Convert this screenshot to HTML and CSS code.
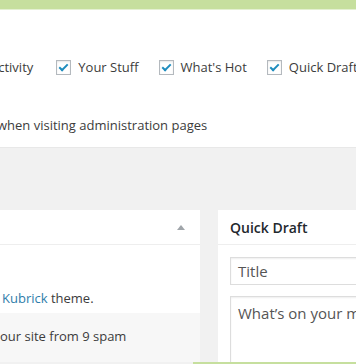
FILE: index.html
```html
<!DOCTYPE html>
<html>
<head>
    <title>Dashboard</title>
    <link rel="stylesheet" href="styles.css">
</head>
<body>
    <div class="topbar"></div>

    <div class="screen-options">
        <div class="boxes">
            <span class="label first">Activity</span>
            <label class="label"><span class="check"></span>Your Stuff</label>
            <label class="label"><span class="check"></span>What's Hot</label>
            <label class="label"><span class="check"></span>Quick Draft</label>
        </div>
        <p class="note">when visiting administration pages</p>
    </div>

    <div class="dashboard">
        <div class="panel left">
            <div class="panel-head">
                <span class="toggle"></span>
            </div>
            <div class="panel-body">
                <p class="theme"><a href="#">Kubrick</a> theme.</p>
            </div>
            <div class="panel-foot">
                <p>our site from 9 spam</p>
            </div>
        </div>
        <div class="panel right">
            <div class="panel-head">
                <h2>Quick Draft</h2>
            </div>
            <div class="panel-body">
                <div class="input">Title</div>
                <div class="textarea">What’s on your mind?</div>
            </div>
        </div>
    </div>
    <div class="strip"></div>
</body>
</html>
```

FILE: styles.css
```css
html, body { margin: 0; padding: 0; }
body { font-family: "Open Sans", Arial, sans-serif; font-size: 13px; color: #3c3c3c; background: #f1f1f1; width: 356px; height: 364px; overflow: hidden; }
.topbar { height: 9px; background: #c6df9e; border-bottom: 1px solid #e4f0d2; }
.screen-options { background: #fff; height: 138px; border-bottom: 1px solid #e8e8e8; box-sizing: border-box; padding-top: 49px; white-space: nowrap; }
.boxes { display: flex; align-items: center; height: 16px; }
.label { display: flex; align-items: center; margin-right: 20px; }
.label.first { margin-left: -10px; margin-right: 23px; }
.check { width: 13px; height: 13px; border: 1px solid #b4b9be; background: #fff; box-shadow: inset 0 1px 2px rgba(0,0,0,0.1); margin-right: 7px; position: relative; flex: none; }
.check::after { content: ""; position: absolute; left: 4px; top: 1px; width: 3px; height: 7px; border: solid #1e8cbe; border-width: 0 2px 2px 0; transform: rotate(45deg); }
.note { margin: 41px 0 0 -3px; }
.dashboard { display: flex; gap: 18px; padding-top: 62px; height: 214px; box-sizing: border-box; overflow: hidden; }
.panel { background: #fff; display: flex; flex-direction: column; }
.left { width: 200px; flex: none; }
.right { flex: 1; min-width: 0; }
.panel-head { height: 35px; border-bottom: 1px solid #eee; display: flex; align-items: center; padding: 0 12px; box-sizing: border-box; flex: none; }
.left .panel-head { justify-content: flex-end; padding-right: 15px; }
.toggle { width: 0; height: 0; border-left: 4px solid transparent; border-right: 4px solid transparent; border-bottom: 5px solid #a0a5aa; }
h2 { font-size: 14px; font-weight: 600; margin: 0; color: #23282d; }
.left .panel-body { height: 68px; box-sizing: border-box; padding: 44px 0 0 2px; }
.theme { margin: 0; }
a { color: #2e7daa; text-decoration: none; }
.panel-foot { background: #f7f7f7; flex: 1; padding: 14px 0 0 0; }
.panel-foot p { margin: 0; }
.right .panel-body { padding: 12px; white-space: nowrap; overflow: hidden; }
.input, .textarea { border: 1px solid #ddd; box-shadow: inset 0 1px 2px rgba(0,0,0,0.07); padding: 0 7px; margin-right: -40px; color: #555; }
.input { height: 28px; line-height: 26px; box-sizing: border-box; font-size: 15px; }
.textarea { margin-top: 11px; height: 90px; padding-top: 6px; font-size: 15px; }
.strip { margin-left: 193px; height: 2px; background: #c6df9e; }
```
